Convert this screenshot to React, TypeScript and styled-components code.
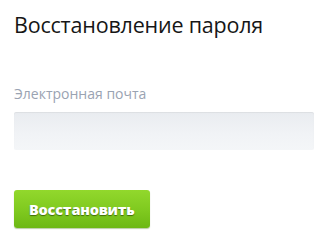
import React from 'react';
import styled, { createGlobalStyle } from 'styled-components';

const GlobalStyle = createGlobalStyle`
  html, body {
    margin: 0;
    padding: 0;
    background: #ffffff;
  }
  body {
    font-family: "Open Sans", "Liberation Sans", sans-serif;
  }
`;

const Page = styled.div`
  width: 328px;
  height: 248px;
  box-sizing: border-box;
  padding: 10px 14px 0 14px;
  display: flex;
  flex-direction: column;
`;

const Title = styled.h1`
  margin: 0;
  font-size: 21.5px;
  font-weight: 400;
  line-height: 30px;
  color: #161616;
  letter-spacing: -0.2px;
`;

const Field = styled.label`
  display: flex;
  flex-direction: column;
  margin-top: 44px;
`;

const Label = styled.span`
  font-size: 14px;
  line-height: 20px;
  color: #9aa3b2;
  margin-bottom: 8px;
`;

const Input = styled.input`
  width: 300px;
  height: 38px;
  box-sizing: border-box;
  border: none;
  border-radius: 2px;
  background: linear-gradient(to bottom, #e9ecf0 0%, #f1f3f6 60%, #f4f6f8 100%);
  box-shadow: inset 0 1px 1px rgba(0, 0, 0, 0.06);
  outline: none;
  padding: 0 10px;
  font-family: inherit;
  font-size: 14px;
`;

const Button = styled.button`
  margin-top: 40px;
  align-self: flex-start;
  height: 38px;
  padding: 0 15px;
  border: none;
  border-radius: 3px;
  background: linear-gradient(to bottom, #92d82c 0%, #7fc91f 55%, #6db814 100%);
  box-shadow: 0 1px 1px rgba(60, 110, 0, 0.35);
  color: #ffffff;
  font-family: "Open Sans", "Liberation Sans", sans-serif;
  font-size: 14.5px;
  font-weight: 800;
  letter-spacing: -0.2px;
  text-shadow: 0 1px 1px rgba(40, 70, 0, 0.7);
  cursor: pointer;
`;

export default function App() {
  return (
    <>
      <GlobalStyle />
      <Page>
        <Title>Восстановление пароля</Title>
        <Field>
          <Label>Электронная почта</Label>
          <Input type="email" />
        </Field>
        <Button type="button">Восстановить</Button>
      </Page>
    </>
  );
}
